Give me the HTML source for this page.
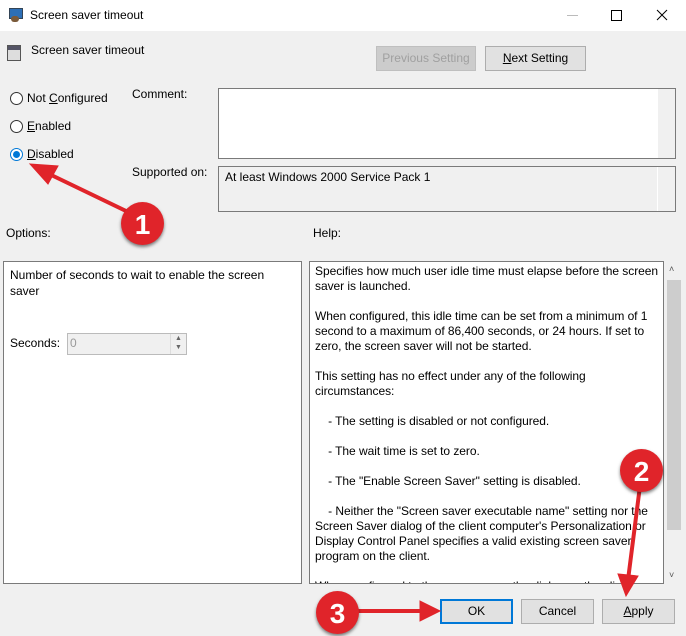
<!DOCTYPE html>
<html><head><style>
*{box-sizing:border-box;margin:0;padding:0}
body{width:686px;height:636px;overflow:hidden;background:#f0f0f0;font-family:"Liberation Sans",sans-serif;font-size:12px;color:#000;position:relative}
.a{position:absolute}
.t{white-space:nowrap;letter-spacing:0}
.btn{position:absolute;background:#e1e1e1;border:1px solid #adadad;text-align:center;line-height:23px}
.box{position:absolute;border:1px solid #7a7a7a;background:#fff}
.rad{position:absolute;width:13px;height:13px;border:1px solid #333;border-radius:50%;background:#fff}
.badge{position:absolute;width:43px;height:43px;border-radius:50%;background:#e0242a;color:#fff;font-weight:bold;font-size:28px;text-align:center;line-height:45px;box-shadow:0 2px 3px rgba(0,0,0,.5)}
.help p{margin-bottom:15px}
</style></head><body>
<div class="a" style="left:0;top:0;width:686px;height:31px;background:#fff"></div>
<div class="a" style="left:9px;top:8px;width:14px;height:11px;background:#2d6fb6;border:1px solid #345"></div>
<div class="a" style="left:11px;top:16px;width:8px;height:6px;background:#7a5a3a;border-radius:3px"></div>
<div class="a t" style="left:30px;top:8px">Screen saver timeout</div>
<div class="a" style="left:567px;top:15px;width:11px;height:1px;background:#bbb"></div>
<div class="a" style="left:611px;top:10px;width:11px;height:11px;border:1px solid #000"></div>
<svg class="a" style="left:656px;top:9px" width="12" height="12"><path d="M1 1L11 11M11 1L1 11" stroke="#000" stroke-width="1"/></svg>

<div class="a" style="left:7px;top:45px;width:14px;height:16px;background:#ddd;border:1px solid #555"></div>
<div class="a" style="left:8px;top:46px;width:12px;height:4px;background:#556"></div>
<div class="a t" style="left:31px;top:43px">Screen saver timeout</div>
<div class="btn" style="left:376px;top:46px;width:100px;height:25px;color:#a0a0a0;background:#ccc;border-color:#bfbfbf">Previous Setting</div>
<div class="btn" style="left:485px;top:46px;width:101px;height:25px"><u>N</u>ext Setting</div>

<div class="rad" style="left:10px;top:92px"></div><div class="a t" style="left:27px;top:91px">Not <u>C</u>onfigured</div>
<div class="rad" style="left:10px;top:120px"></div><div class="a t" style="left:27px;top:119px"><u>E</u>nabled</div>
<div class="rad" style="left:10px;top:148px;border-color:#0078d7"></div><div class="a" style="left:13px;top:151px;width:7px;height:7px;border-radius:50%;background:#0078d7"></div><div class="a t" style="left:27px;top:147px"><u>D</u>isabled</div>

<div class="a t" style="left:132px;top:87px">Comment:</div>
<div class="box" style="left:218px;top:88px;width:458px;height:71px"></div>
<div class="a" style="left:658px;top:89px;width:17px;height:69px;background:#f0f0f0"></div>
<div class="a t" style="left:132px;top:165px">Supported on:</div>
<div class="box" style="left:218px;top:166px;width:458px;height:46px;background:#f0f0f0"></div>
<div class="a" style="left:657px;top:167px;width:1px;height:44px;background:#fff"></div>
<div class="a t" style="left:225px;top:170px">At least Windows 2000 Service Pack 1</div>

<div class="a t" style="left:6px;top:226px">Options:</div>
<div class="a t" style="left:313px;top:226px">Help:</div>

<div class="box" style="left:3px;top:261px;width:299px;height:323px"></div>
<div class="a t" style="left:10px;top:268px">Number of seconds to wait to enable the screen</div>
<div class="a t" style="left:10px;top:284px">saver</div>
<div class="a t" style="left:10px;top:336px">Seconds:</div>
<div class="a" style="left:67px;top:333px;width:120px;height:22px;border:1px solid #bbb;background:#f0f0f0;color:#999;padding:2px 0 0 2px">0</div>
<div class="a" style="left:170px;top:334px;width:16px;height:20px;border-left:1px solid #ddd;font-size:7px;color:#666;text-align:center;line-height:9px">▲<br>▼</div>

<div class="box help" style="left:309px;top:261px;width:355px;height:323px;overflow:hidden;padding:2px 0 0 5px;line-height:15px;white-space:nowrap;letter-spacing:-0.05px">
<p>Specifies how much user idle time must elapse before the screen<br>saver is launched.</p>
<p>When configured, this idle time can be set from a minimum of 1<br>second to a maximum of 86,400 seconds, or 24 hours. If set to<br>zero, the screen saver will not be started.</p>
<p>This setting has no effect under any of the following<br>circumstances:</p>
<p>&nbsp;&nbsp;&nbsp;&nbsp;- The setting is disabled or not configured.</p>
<p>&nbsp;&nbsp;&nbsp;&nbsp;- The wait time is set to zero.</p>
<p>&nbsp;&nbsp;&nbsp;&nbsp;- The "Enable Screen Saver" setting is disabled.</p>
<p>&nbsp;&nbsp;&nbsp;&nbsp;- Neither the "Screen saver executable name" setting nor the<br>Screen Saver dialog of the client computer's Personalization or<br>Display Control Panel specifies a valid existing screen saver<br>program on the client.</p>
<p>When configured to the screen saver the dialog on the client</p>
</div>
<div class="a" style="left:666px;top:261px;width:18px;height:323px;background:#f0f0f0"></div>
<div class="a" style="left:667px;top:280px;width:14px;height:250px;background:#cdcdcd"></div>
<div class="a" style="left:669px;top:264px;font-size:9px;color:#555">˄</div>
<div class="a" style="left:669px;top:570px;font-size:9px;color:#555">˅</div>

<div class="btn" style="left:440px;top:599px;width:73px;height:25px;border:2px solid #0078d7;line-height:21px">OK</div>
<div class="btn" style="left:521px;top:599px;width:73px;height:25px">Cancel</div>
<div class="btn" style="left:602px;top:599px;width:73px;height:25px"><u>A</u>pply</div>

<svg class="a" style="left:0;top:0" width="686" height="636">
<g stroke="#e0242a" stroke-width="4" fill="#e0242a" stroke-linecap="round">
<path d="M128 212L45 172"/><path d="M30 164L58 166L48 184Z" stroke-width="1"/>
<path d="M641 478L628 580"/><path d="M626 596L618 574L638 576Z" stroke-width="1"/>
<path d="M355 611L425 611"/><path d="M440 611L420 601L420 621Z" stroke-width="1"/>
</g></svg>
<div class="badge" style="left:121px;top:202px">1</div>
<div class="badge" style="left:620px;top:449px">2</div>
<div class="badge" style="left:316px;top:591px">3</div>
</body></html>
